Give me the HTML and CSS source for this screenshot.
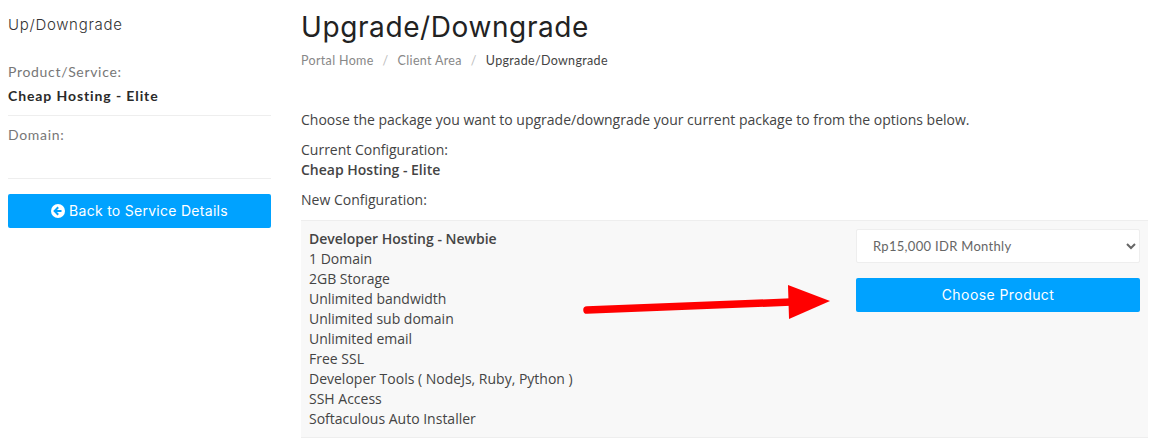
FILE: index.html
```html
<!DOCTYPE html>
<html lang="en">
<head>
<meta charset="utf-8">
<title>Upgrade/Downgrade</title>
<link rel="stylesheet" href="styles.css">
</head>
<body>
<div class="page">
  <aside class="sidebar">
    <h3 class="side-title">Up/Downgrade</h3>
    <div class="side-item side-product">
      <div class="side-label">Product/Service:</div>
      <div class="side-value">Cheap Hosting - Elite</div>
    </div>
    <div class="side-item side-domain">
      <div class="side-label">Domain:</div>
    </div>
    <a class="btn btn-back" href="#">
      <svg class="back-icon" viewBox="0 0 14 14" aria-hidden="true">
        <circle cx="7" cy="7" r="7" fill="#fff"/>
        <path d="M7.2 3.3 3.6 7l3.6 3.7M3.9 7h6.6" fill="none" stroke="#00a2ff" stroke-width="2"/>
      </svg>
      Back to Service Details
    </a>
  </aside>
  <main class="main">
    <h1 class="title">Upgrade/Downgrade</h1>
    <nav class="crumbs">
      <a href="#">Portal Home</a><span class="sep">/</span><a href="#">Client Area</a><span class="sep">/</span><span class="current">Upgrade/Downgrade</span>
    </nav>
    <p class="intro">Choose the package you want to upgrade/downgrade your current package to from the options below.</p>
    <p class="config">Current Configuration:<br><strong>Cheap Hosting - Elite</strong></p>
    <p class="config">New Configuration:</p>
    <div class="package">
      <div class="features">
        <strong>Developer Hosting - Newbie</strong><br>
        1 Domain<br>
        2GB Storage<br>
        Unlimited bandwidth<br>
        Unlimited sub domain<br>
        Unlimited email<br>
        Free SSL<br>
        Developer Tools ( NodeJs, Ruby, Python )<br>
        SSH Access<br>
        Softaculous Auto Installer
      </div>
      <div class="actions">
        <select class="cycle"><option>Rp15,000 IDR Monthly</option></select>
        <a class="btn btn-choose" href="#">Choose Product</a>
      </div>
    </div>
  </main>
</div>
<svg class="arrow" viewBox="0 0 260 40" aria-hidden="true">
  <path d="M4 29 208 21" stroke="#f00" stroke-width="7.5" stroke-linecap="round" fill="none"/>
  <path d="M205 4 247 20 206 38Z" fill="#f00"/>
</svg>
</body>
</html>
```
FILE: styles.css
```css
* { box-sizing: border-box; }
html, body { margin: 0; padding: 0; background: #fff; }
body {
  font-family: "Open Sans", sans-serif;
  font-size: 14px;
  line-height: 20px;
  color: #444;
  height: 443px;
  overflow: hidden;
  position: relative;
}
.page {
  display: flex;
  gap: 30px;
  padding: 0 21px 0 8px;
}
.sidebar { width: 263px; flex: none; }
.side-title {
  margin: 0;
  padding-top: 15px;
  font: 300 15px/20px Inter, sans-serif;
  letter-spacing: .7px;
  color: #333;
}
.side-item { border-bottom: 1px solid #eee; }
.side-product { height: 81px; padding-top: 27px; }
.side-domain { height: 63px; padding-top: 9px; }
.side-label {
  font: 400 14px/20px Lato, sans-serif;
  letter-spacing: .68px;
  color: #777;
}
.side-value {
  margin-top: 4px;
  font: 700 14px/20px Lato, sans-serif;
  letter-spacing: .9px;
  color: #2a2a2a;
}
.btn {
  display: flex;
  align-items: center;
  justify-content: center;
  height: 34px;
  background: #00a2ff;
  border-radius: 2px;
  color: #fff;
  font: 400 14px/20px Inter, sans-serif;
  text-decoration: none;
}
.btn-back { margin-top: 15px; gap: 4px; letter-spacing: .28px; }
.btn-choose { letter-spacing: .43px; }
.back-icon { width: 14px; height: 14px; }
.main { flex: 1; min-width: 0; }
.title {
  margin: 0;
  padding-top: 9px;
  font: 400 28px/36px Inter, sans-serif;
  letter-spacing: .6px;
  color: #222;
}
.crumbs {
  margin-top: 6px;
  font: 400 12.5px/20px Lato, sans-serif;
  letter-spacing: .33px;
  color: #888;
}
.crumbs a { color: #888; text-decoration: none; }
.crumbs .sep { padding: 0 9px; color: #bbb; }
.crumbs .current { color: #444; }
.intro { margin: 39px 0 0; }
.config { margin: 10px 0 0; }
.config strong { font-weight: 600; }
.package {
  display: flex;
  justify-content: space-between;
  margin-top: 10px;
  height: 218px;
  padding: 8px;
  background: #f8f8f8;
  border-top: 1px solid #eee;
  border-bottom: 1px solid #eee;
}
.features strong { font-weight: 600; }
.actions {
  width: 284px;
  display: flex;
  flex-direction: column;
  gap: 15px;
}
.cycle {
  height: 34px;
  width: 100%;
  padding: 0 12px 1px;
  background: #fff;
  border: 1px solid #eee;
  border-radius: 2px;
  font: 400 13px/20px Lato, sans-serif;
  letter-spacing: .3px;
  color: #666;
}
.arrow {
  position: absolute;
  left: 583px;
  top: 281px;
  width: 260px;
  height: 40px;
}
```
